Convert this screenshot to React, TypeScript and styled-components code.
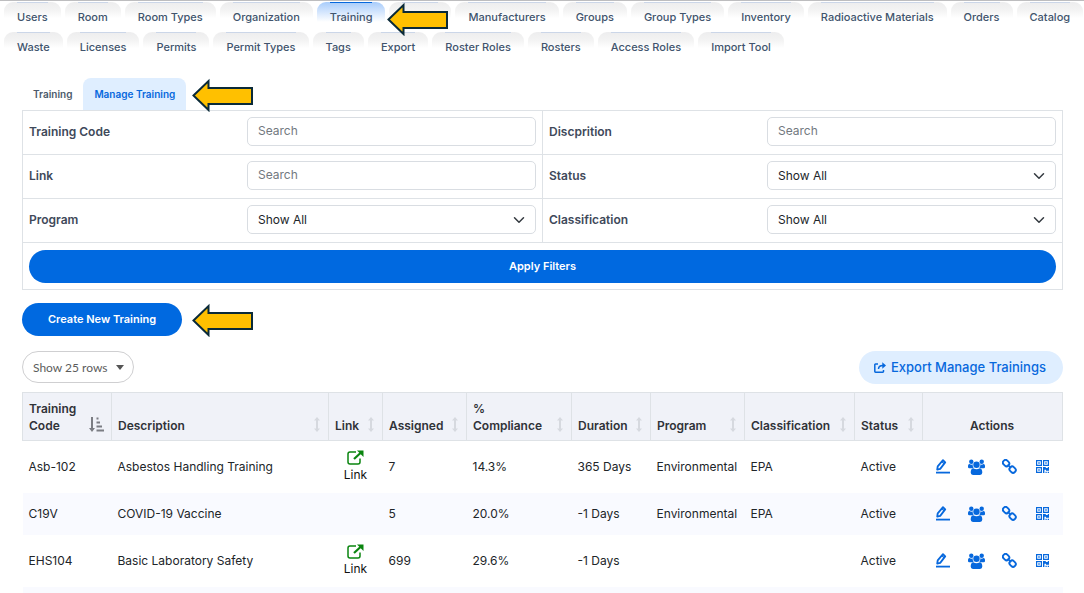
import React from "react";
import styled, { createGlobalStyle } from "styled-components";

const GlobalStyle = createGlobalStyle`
  *, *::before, *::after { box-sizing: border-box; }
  body {
    margin: 0;
    background: #fff;
    color: #212529;
    font: 12px/17px Inter, "Liberation Sans", sans-serif;
  }
  button, input, select { font: inherit; color: inherit; }
`;

const Page = styled.div`
  border-top: 1px solid #bdbdbf;
`;

const Nav = styled.nav`
  display: flex;
  flex-wrap: wrap;
  gap: 0 4px;
  padding: 1px 0 0 4px;
`;

const NavItem = styled.div`
  position: relative;
`;

const NavTab = styled.button<{ $active?: boolean }>`
  display: flex;
  justify-content: center;
  height: 30px;
  padding: 0 13px;
  border: 0;
  border-radius: 9px 9px 0 0;
  background: ${(p) =>
    p.$active
      ? "linear-gradient(#a8ccfb, #fff 20px)"
      : "linear-gradient(#ededee, #f3f3f3 8px, #fff 16px)"};
  color: #41546d;
  font-size: 11px;
  font-weight: 500;
  line-height: 15px;
  cursor: pointer;

  span {
    height: 22px;
    padding-top: 7px;
    border-top: 1px solid ${(p) => (p.$active ? "#0768dd" : "#cbd6e8")};
  }
  span:empty { width: 36px; }
`;

const Content = styled.main`
  padding: 16px 21px 0 22px;
`;

const SubTabs = styled.div`
  display: flex;
`;

const SubTabItem = styled.div`
  position: relative;
`;

const SubTab = styled.button<{ $active?: boolean }>`
  height: 32px;
  padding: 0 11px;
  border: 0;
  border-radius: 8px 8px 0 0;
  background: ${(p) => (p.$active ? "#dfeeff" : "transparent")};
  color: ${(p) => (p.$active ? "#0768dd" : "#4c5a6b")};
  font-size: 10px;
  font-weight: 600;
  cursor: pointer;
`;

const ArrowSvg = styled.svg<{ $gap: number }>`
  position: absolute;
  z-index: 1;
  left: 100%;
  top: 0;
  margin-left: ${(p) => p.$gap}px;
  pointer-events: none;
`;

const FilterForm = styled.form`
  display: grid;
  grid-template-columns: 1fr 1fr;
  border: 1px solid #dee2e6;
  border-width: 1px 0 0 1px;
`;

const FilterCell = styled.div`
  display: grid;
  grid-template-columns: 11fr 15fr;
  column-gap: 6px;
  align-items: start;
  padding: 6px;
  height: 44px;
  border: 1px solid #dee2e6;
  border-width: 0 1px 1px 0;
`;

const ApplyCell = styled.div`
  grid-column: 1 / -1;
  padding: 7px 6px 6px;
  border: 1px solid #dee2e6;
  border-width: 0 1px 1px 0;
`;

const FilterLabel = styled.label`
  padding-top: 6px;
  color: #40495a;
  font-weight: 600;
`;

const TextField = styled.input`
  width: 100%;
  height: 29px;
  padding: 0 10px 2px;
  border: 1px solid #d9dde2;
  border-radius: 5px;
  background: #fff;
  &::placeholder { color: #727980; opacity: 1; }
`;

const SelectWrap = styled.div`
  position: relative;
  svg {
    position: absolute;
    right: 11px;
    top: 9px;
    pointer-events: none;
  }
`;

const SelectField = styled.select`
  appearance: none;
  display: block;
  width: 100%;
  height: 29px;
  padding: 0 10px;
  border: 1px solid #d9dde2;
  border-radius: 5px;
  background: #fff;
`;

const PrimaryButton = styled.button<{ $wide?: boolean }>`
  display: block;
  width: ${(p) => (p.$wide ? "100%" : "auto")};
  height: 33px;
  padding: 0 26px;
  border: 0;
  border-radius: 17px;
  background: #0069e0;
  color: #fff;
  font-size: 11px;
  font-weight: 600;
  cursor: pointer;
`;

const CreateRow = styled.div`
  position: relative;
  width: fit-content;
  margin: 13px 0 15px;
`;

const Toolbar = styled.div`
  display: flex;
  justify-content: space-between;
  margin-bottom: 8px;
`;

const RowCount = styled.div`
  position: relative;
  select {
    appearance: none;
    width: 112px;
    height: 32px;
    padding: 0 10px;
    border: 1px solid #cfcfd1;
    border-radius: 16px;
    background: #fff;
    color: #5c5c5c;
    font-family: Lato, sans-serif;
    font-size: 12px;
  }
  svg {
    position: absolute;
    right: 10px;
    top: 14px;
    pointer-events: none;
  }
`;

const ExportButton = styled.button`
  display: flex;
  align-items: center;
  gap: 5px;
  height: 33px;
  padding: 0 17px 0 15px;
  border: 0;
  border-radius: 17px;
  background: #dfeeff;
  color: #0768dd;
  font-size: 13px;
  font-weight: 500;
  cursor: pointer;
`;

const DataTable = styled.table`
  width: 100%;
  border-collapse: collapse;
  table-layout: fixed;
`;

const HeadCell = styled.th<{ $center?: boolean }>`
  height: 48px;
  padding: 6px 7px 6px 6px;
  border: 1px solid #dee2e6;
  background: #f0f2f8;
  color: #303338;
  font-weight: 600;
  text-align: ${(p) => (p.$center ? "center" : "left")};
  vertical-align: bottom;
`;

const HeadInner = styled.div<{ $center?: boolean }>`
  display: flex;
  align-items: flex-end;
  justify-content: ${(p) => (p.$center ? "center" : "space-between")};
  svg {
    flex: none;
    margin-bottom: 2px;
  }
`;

const BodyRow = styled.tr<{ $tall?: boolean }>`
  height: ${(p) => (p.$tall ? "52px" : "42px")};
  &:nth-child(even) { background: #f9faff; }
`;

const NextRow = styled.tr`
  height: 6px;
  background: #f9faff;
`;

const Cell = styled.td`
  padding: 0 6px;
  white-space: nowrap;
`;

const RowLink = styled.a`
  display: flex;
  flex-direction: column;
  align-items: center;
  gap: 1px;
  color: #111;
  text-decoration: none;
`;

const ActionsCell = styled.td`
  padding: 0;
`;

const Actions = styled.div`
  display: grid;
  grid-template-columns: repeat(4, 33px);
  justify-content: center;
  justify-items: center;
  align-items: center;
`;

const IconButton = styled.button`
  display: flex;
  padding: 0;
  border: 0;
  background: none;
  color: #0768dd;
  cursor: pointer;
`;

const Arrow = ({ gap }: { gap: number }) => (
  <ArrowSvg $gap={gap} width="62" height="34" viewBox="0 0 62 34" aria-hidden="true">
    <path
      d="M1.5 17.5 16.5 3V10H60V26H16.5V32Z"
      fill="#ffc000"
      stroke="#0a2a38"
      strokeWidth="2"
    />
  </ArrowSvg>
);

const Chevron = () => (
  <svg width="12" height="12" viewBox="0 0 16 16" fill="none" stroke="#343a40" strokeWidth="2" strokeLinecap="round" strokeLinejoin="round" aria-hidden="true">
    <path d="m2 5 6 6 6-6" />
  </svg>
);

const SortIcon = () => (
  <svg width="8" height="15" viewBox="0 0 8 15" aria-hidden="true">
    <path d="M4 0 7 3.5H5V11.5H7L4 15 1 11.5H3V3.5H1Z" fill="#d6d9df" />
  </svg>
);

const SortedIcon = () => (
  <svg width="15" height="15" viewBox="0 0 15 15" fill="none" stroke="#7b7d83" strokeWidth="2" aria-hidden="true">
    <path d="M3 0V13M7.5 1.5H9.5M7.5 5.5H11M7.5 9.5H13M7.5 13.5H15" />
    <path d="M0 11H6L3 15Z" fill="#7b7d83" stroke="none" />
  </svg>
);

const ExternalIcon = () => (
  <svg width="17" height="15" viewBox="0 0 17 15" fill="none" stroke="#0a850f" aria-hidden="true">
    <path d="M9 2H3Q1 2 1 4V12Q1 14 3 14H11Q13 14 13 12V8.5" strokeWidth="1.5" />
    <path d="M7 9 13.5 3" strokeWidth="2.2" />
    <path d="M10 .5H16.5V7Z" fill="#0a850f" stroke="none" />
  </svg>
);

const ShareIcon = () => (
  <svg width="12" height="11" viewBox="0 0 12 11" fill="none" stroke="currentColor" strokeWidth="1.5" aria-hidden="true">
    <path d="M4 2H1.5Q.8 2 .8 2.7V9.5Q.8 10.2 1.5 10.2H8.8Q9.5 10.2 9.5 9.5V8" />
    <path d="M4.5 7Q4.5 3.5 9 3.5" />
    <path d="M8.3 .3 12 3.5 8.3 6.7Z" fill="currentColor" stroke="none" />
  </svg>
);

const EditIcon = () => (
  <svg width="14" height="15" viewBox="0 0 14 15" fill="none" stroke="currentColor" strokeWidth="1.8" strokeLinejoin="round" aria-hidden="true">
    <path d="M1.2 10.6 1.7 7.3 7 1.2 9.2 3.4 4.2 9.9Z" />
    <path d="M5.8 2.5 8.2 4.9" strokeWidth="1.2" />
    <path d="M0 13.6H14" />
  </svg>
);

const UsersIcon = () => (
  <svg width="17" height="16" viewBox="0 0 17 16" fill="currentColor" aria-hidden="true">
    <circle cx="3.3" cy="2.8" r="2.2" />
    <circle cx="13.7" cy="2.8" r="2.2" />
    <circle cx="8.5" cy="5.8" r="3.2" />
    <path d="M0 8V6.7Q.2 4.8 1.5 5 3.3 6.2 4.6 5.3 4.4 7.5 5.7 8.7 4.5 8.8 3.8 9.3H1.3Q0 9.3 0 8ZM17 8V6.7Q16.8 4.8 15.5 5 13.7 6.2 12.4 5.3 12.6 7.5 11.3 8.7 12.5 8.8 13.2 9.3H15.7Q17 9.3 17 8Z" />
    <path d="M2.7 13.6Q2.7 9.3 5.3 9.2 8.5 11.4 11.7 9.2 14.3 9.3 14.3 13.6 14.3 16 12 16H5Q2.7 16 2.7 13.6Z" />
  </svg>
);

const LinkIcon = () => (
  <svg width="15" height="15" viewBox="0 0 15 15" fill="none" stroke="currentColor" strokeWidth="1.9" aria-hidden="true">
    <rect x="-3.3" y="-2.6" width="6.6" height="5.2" rx="2.4" transform="translate(4.1 4.1) rotate(45)" />
    <rect x="-3.3" y="-2.6" width="6.6" height="5.2" rx="2.4" transform="translate(10.6 10.6) rotate(45)" />
    <path d="M5.6 5.6 9.2 9.2" strokeWidth="1.5" />
  </svg>
);

const QrIcon = () => (
  <svg width="13" height="13" viewBox="0 0 13 13" aria-hidden="true">
    <g fill="none" stroke="currentColor" strokeWidth="1.2">
      <path d="M.6.6H5.4V5.4H.6ZM7.6.6H12.4V5.4H7.6ZM.6 7.6H5.4V12.4H.6Z" />
    </g>
    <path d="M2.3 2.3H3.7V3.7H2.3ZM9.3 2.3H10.7V3.7H9.3ZM2.3 9.3H3.7V10.7H2.3ZM7 7H9.8V8H11.8V7H13V10.7H10V9.7H8.4V13H7ZM9.5 11.7H10.7V13H9.5ZM11.7 11.7H13V13H11.7Z" fill="currentColor" />
  </svg>
);

const navTabs = [
  "Users", "Room", "Room Types", "Organization", "Training", "", "Manufacturers",
  "Groups", "Group Types", "Inventory", "Radioactive Materials", "Orders", "Catalog",
  "Waste", "Licenses", "Permits", "Permit Types", "Tags", "Export", "Roster Roles",
  "Rosters", "Access Roles", "Import Tool",
];

const filters = [
  { id: "code", label: "Training Code", kind: "text" },
  { id: "description", label: "Discprition", kind: "text" },
  { id: "link", label: "Link", kind: "text" },
  { id: "status", label: "Status", kind: "select" },
  { id: "program", label: "Program", kind: "select" },
  { id: "classification", label: "Classification", kind: "select" },
];

const columns: { name: string; width?: number }[] = [
  { name: "Training Code", width: 89 },
  { name: "Description" },
  { name: "Link", width: 54 },
  { name: "Assigned", width: 84 },
  { name: "% Compliance", width: 105 },
  { name: "Duration", width: 79 },
  { name: "Program", width: 94 },
  { name: "Classification", width: 110 },
  { name: "Status", width: 68 },
  { name: "Actions", width: 140 },
];

const trainings = [
  { code: "Asb-102", description: "Asbestos Handling Training", link: true, assigned: 7, compliance: "14.3%", duration: "365 Days", program: "Environmental", classification: "EPA" },
  { code: "C19V", description: "COVID-19 Vaccine", link: false, assigned: 5, compliance: "20.0%", duration: "-1 Days", program: "Environmental", classification: "EPA" },
  { code: "EHS104", description: "Basic Laboratory Safety", link: true, assigned: 699, compliance: "29.6%", duration: "-1 Days", program: "", classification: "" },
];

export default function App() {
  return (
    <Page>
      <GlobalStyle />
      <Nav>
        {navTabs.map((name, i) => (
          <NavItem key={i}>
            <NavTab type="button" $active={name === "Training"}>
              <span>{name}</span>
            </NavTab>
            {name === "Training" && <Arrow gap={2} />}
          </NavItem>
        ))}
      </Nav>
      <Content>
        <SubTabs>
          <SubTab type="button">Training</SubTab>
          <SubTabItem>
            <SubTab type="button" $active>Manage Training</SubTab>
            <Arrow gap={6} />
          </SubTabItem>
        </SubTabs>
        <FilterForm onSubmit={(e) => e.preventDefault()}>
          {filters.map((f) => (
            <FilterCell key={f.id}>
              <FilterLabel htmlFor={f.id}>{f.label}</FilterLabel>
              {f.kind === "text" ? (
                <TextField id={f.id} placeholder="Search" />
              ) : (
                <SelectWrap>
                  <SelectField id={f.id}>
                    <option>Show All</option>
                  </SelectField>
                  <Chevron />
                </SelectWrap>
              )}
            </FilterCell>
          ))}
          <ApplyCell>
            <PrimaryButton type="submit" $wide>Apply Filters</PrimaryButton>
          </ApplyCell>
        </FilterForm>
        <CreateRow>
          <PrimaryButton type="button">Create New Training</PrimaryButton>
          <Arrow gap={10} />
        </CreateRow>
        <Toolbar>
          <RowCount>
            <select aria-label="Rows per page">
              <option>Show 25 rows</option>
            </select>
            <svg width="8" height="5" viewBox="0 0 8 5" aria-hidden="true">
              <path d="M0 0H8L4 5Z" fill="#555" />
            </svg>
          </RowCount>
          <ExportButton type="button">
            <ShareIcon />
            Export Manage Trainings
          </ExportButton>
        </Toolbar>
        <DataTable>
          <colgroup>
            {columns.map((c) => (
              <col key={c.name} width={c.width} />
            ))}
          </colgroup>
          <thead>
            <tr>
              {columns.map((c, i) => (
                <HeadCell key={c.name} $center={c.name === "Actions"}>
                  <HeadInner $center={c.name === "Actions"}>
                    {c.name}
                    {i === 0 ? <SortedIcon /> : c.name !== "Actions" && <SortIcon />}
                  </HeadInner>
                </HeadCell>
              ))}
            </tr>
          </thead>
          <tbody>
            {trainings.map((t) => (
              <BodyRow key={t.code} $tall={t.link}>
                <Cell>{t.code}</Cell>
                <Cell>{t.description}</Cell>
                <Cell>
                  {t.link && (
                    <RowLink href="#">
                      <ExternalIcon />
                      Link
                    </RowLink>
                  )}
                </Cell>
                <Cell>{t.assigned}</Cell>
                <Cell>{t.compliance}</Cell>
                <Cell>{t.duration}</Cell>
                <Cell>{t.program}</Cell>
                <Cell>{t.classification}</Cell>
                <Cell>Active</Cell>
                <ActionsCell>
                  <Actions>
                    <IconButton type="button" aria-label="Edit"><EditIcon /></IconButton>
                    <IconButton type="button" aria-label="Users"><UsersIcon /></IconButton>
                    <IconButton type="button" aria-label="Copy link"><LinkIcon /></IconButton>
                    <IconButton type="button" aria-label="QR code"><QrIcon /></IconButton>
                  </Actions>
                </ActionsCell>
              </BodyRow>
            ))}
            <NextRow>
              <Cell colSpan={10} />
            </NextRow>
          </tbody>
        </DataTable>
      </Content>
    </Page>
  );
}
